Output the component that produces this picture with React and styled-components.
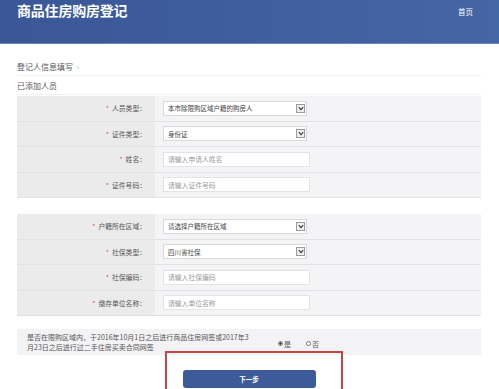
import React from "react";
import styled, { createGlobalStyle } from "styled-components";

const Global = createGlobalStyle`
  html, body { margin: 0; padding: 0; background: #ffffff; }
  body { font-family: "Noto Sans CJK SC", "Noto Sans", sans-serif; width: 499px; height: 389px; overflow: hidden; }
`;

const Header = styled.header`
  height: 40px;
  border-bottom: 1px solid #6a84b6;
  background: linear-gradient(90deg, #3a5797 0%, #3f5e9f 50%, #4566a6 100%);
  display: flex;
  justify-content: space-between;
  align-items: flex-start;
  padding: 3px 26px 0 17px;
`;

const Title = styled.h1`
  margin: 0;
  font-size: 14px;
  line-height: 15px;
  font-weight: 700;
  color: #ffffff;
  letter-spacing: -0.2px;
`;

const HomeLink = styled.span`
  margin-top: 5px;
  font-size: 7.5px;
  line-height: 8px;
  color: #ffffff;
`;

const Content = styled.main`
  width: 464px;
  margin: 13px 0 0 17px;
`;

const SectionLine = styled.div`
  height: 18px;
  border-bottom: 1px solid #f2f2f2;
  display: flex;
  align-items: center;
  font-size: 8px;
  color: #555;
`;

const Chevron = styled.span`
  margin-left: 4px;
  color: #bbb;
  font-size: 8px;
`;

const Group = styled.div`
  margin-top: ${(p) => p.$gap}px;
  display: flex;
  flex-direction: column;
`;

const Row = styled.div`
  height: 25.5px;
  display: grid;
  grid-template-columns: 138px 1fr;
  border-bottom: 1px solid #e2e2e4;
  box-sizing: border-box;
`;

const LabelCell = styled.div`
  background: #ebebeb;
  display: flex;
  align-items: center;
  justify-content: flex-end;
  padding-right: 9px;
  font-size: 6.8px;
  color: #555;
`;

const Star = styled.span`
  color: #e04a4a;
  margin-right: 3px;
`;

const ValueCell = styled.div`
  background: #f4f3f5;
  display: flex;
  align-items: center;
  padding-left: 8px;
`;

const SelectBox = styled.div`
  width: 144px;
  height: 15px;
  box-sizing: border-box;
  background: #fff;
  border: 1px solid #d8d8d8;
  display: flex;
  align-items: center;
  justify-content: space-between;
  padding: 0 1px 0 4px;
  font-size: 6.5px;
  color: #444;
`;

const ArrowBtn = styled.span`
  width: 9px;
  height: 9px;
  box-sizing: border-box;
  border: 1px solid #9a9a9a;
  background: #f0f0f0;
  display: flex;
  align-items: center;
  justify-content: center;
`;

const InputBox = styled.div`
  width: 147px;
  height: 15px;
  box-sizing: border-box;
  background: #fff;
  border: 1px solid #e4e4e4;
  display: flex;
  align-items: center;
  padding-left: 4px;
  font-size: 6.8px;
  color: #999;
`;

const Question = styled.div`
  margin-top: 13px;
  height: 26px;
  background: #f3f2f4;
  display: flex;
  align-items: center;
  padding-left: 10px;
`;

const QText = styled.div`
  width: 226px;
  font-size: 7px;
  line-height: 10px;
  color: #555;
`;

const Radios = styled.div`
  margin-left: 25px;
  margin-top: 3px;
  display: flex;
  gap: 15px;
  font-size: 7px;
  color: #555;
`;

const RadioItem = styled.span`
  display: flex;
  align-items: center;
  gap: 1px;
`;

const Dot = styled.span`
  width: 5px;
  height: 5px;
  border-radius: 50%;
  border: 1px solid #777;
  box-sizing: border-box;
  background: ${(p) => (p.$on ? "radial-gradient(circle, #333 45%, #fff 55%)" : "#fff")};
`;

const ButtonArea = styled.div`
  position: relative;
  display: flex;
  justify-content: center;
  padding-top: 15px;
`;

const NextButton = styled.button`
  width: 133px;
  height: 18px;
  border: none;
  border-radius: 3px;
  background: #3e5b99;
  color: #fff;
  font-family: inherit;
  font-size: 6.5px;
  font-weight: 700;
  padding: 0;
`;

const RedFrame = styled.div`
  position: absolute;
  left: 148px;
  top: -4px;
  width: 178px;
  height: 60px;
  box-sizing: border-box;
  border: 2px solid #c84545;
  pointer-events: none;
`;

const Arrow = () => (
  <svg width="6" height="5" viewBox="0 0 6 5">
    <path d="M0.8 1.2 L3 3.6 L5.2 1.2" fill="none" stroke="#333" strokeWidth="1.1" />
  </svg>
);

const group1 = [
  { label: "人员类型", type: "select", value: "本市除限购区域户籍的购房人" },
  { label: "证件类型", type: "select", value: "身份证" },
  { label: "姓名", type: "input", value: "请输入申请人姓名" },
  { label: "证件号码", type: "input", value: "请输入证件号码" },
];

const group2 = [
  { label: "户籍所在区域", type: "select", value: "请选择户籍所在区域" },
  { label: "社保类型", type: "select", value: "四川省社保" },
  { label: "社保编码", type: "input", value: "请输入社保编码" },
  { label: "缴存单位名称", type: "input", value: "请输入单位名称" },
];

const FormRow = ({ label, type, value }) => (
  <Row>
    <LabelCell>
      <Star>*</Star>
      {label}：
    </LabelCell>
    <ValueCell>
      {type === "select" ? (
        <SelectBox>
          <span>{value}</span>
          <ArrowBtn>
            <Arrow />
          </ArrowBtn>
        </SelectBox>
      ) : (
        <InputBox>{value}</InputBox>
      )}
    </ValueCell>
  </Row>
);

export default function App() {
  return (
    <>
      <Global />
      <Header>
        <Title>商品住房购房登记</Title>
        <HomeLink>首页</HomeLink>
      </Header>
      <Content>
        <SectionLine>
          登记人信息填写<Chevron>›</Chevron>
        </SectionLine>
        <SectionLine>已添加人员</SectionLine>
        <Group $gap={1}>
          {group1.map((r) => (
            <FormRow key={r.label} {...r} />
          ))}
        </Group>
        <Group $gap={16}>
          {group2.map((r) => (
            <FormRow key={r.label} {...r} />
          ))}
        </Group>
        <Question>
          <QText>
            是否在限购区域内，于2016年10月1日之后进行商品住房网签或2017年3月23日之后进行过二手住房买卖合同网签
          </QText>
          <Radios>
            <RadioItem>
              <Dot $on />是
            </RadioItem>
            <RadioItem>
              <Dot />否
            </RadioItem>
          </Radios>
        </Question>
        <ButtonArea>
          <NextButton>下一步</NextButton>
          <RedFrame />
        </ButtonArea>
      </Content>
    </>
  );
}
